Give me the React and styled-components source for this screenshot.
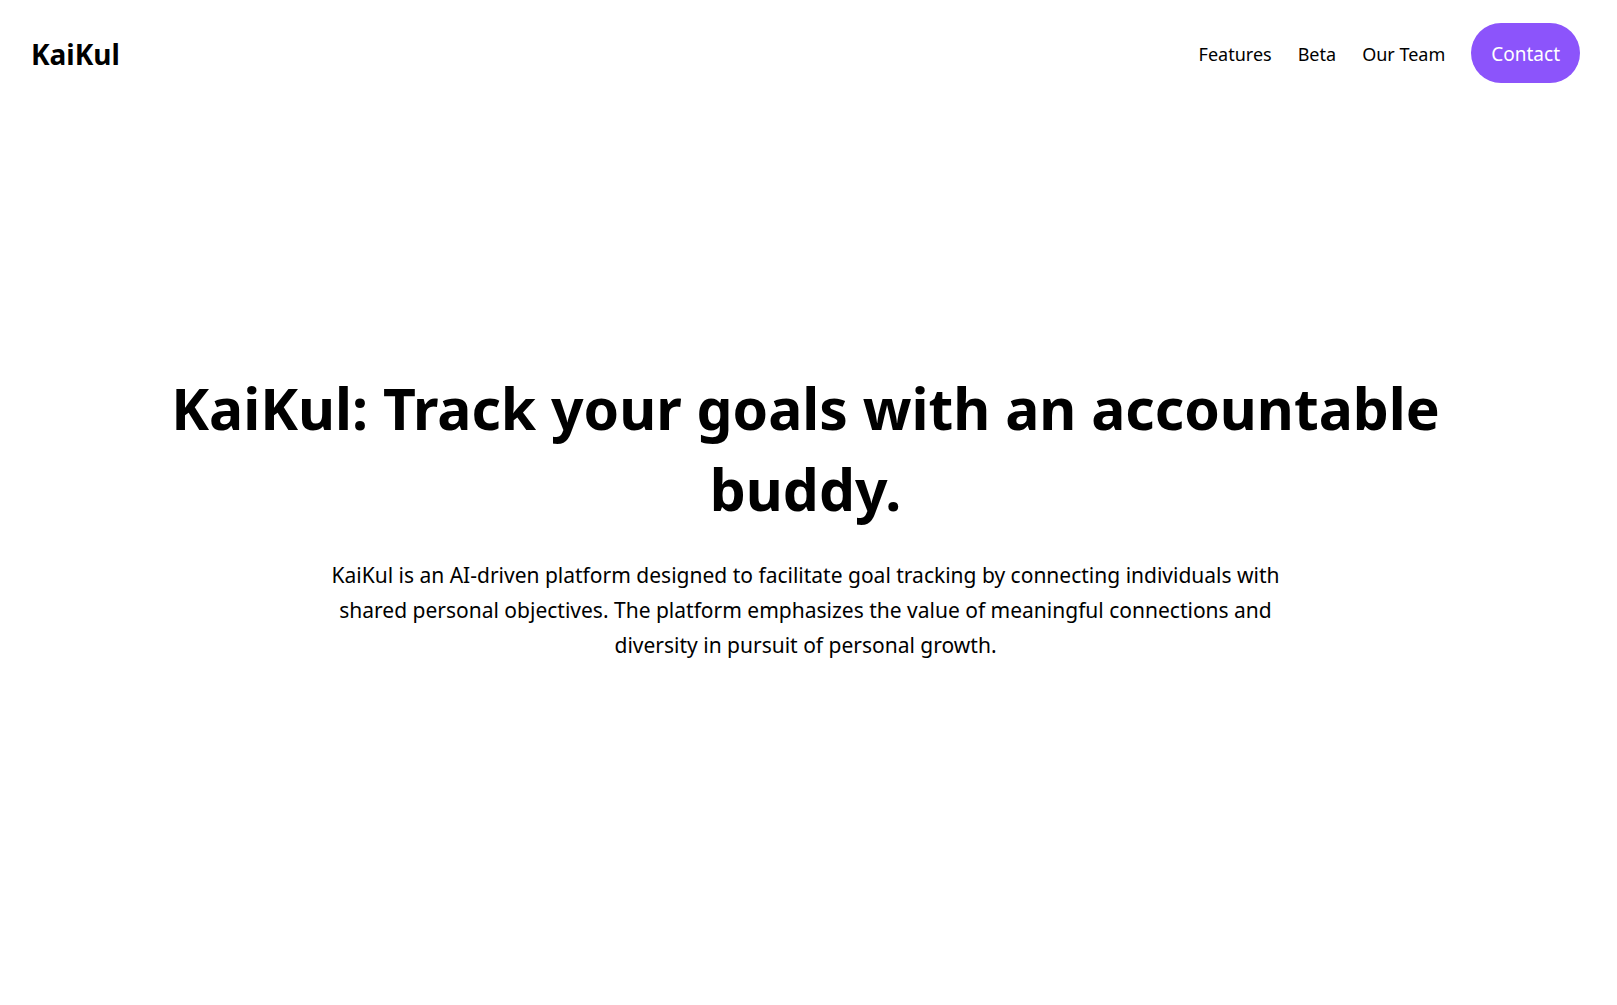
import React from "react";
import styled, { createGlobalStyle } from "styled-components";

const GlobalStyle = createGlobalStyle`
  *, *::before, *::after { box-sizing: border-box; }
  body {
    margin: 0;
    background: #fff;
    color: #000;
    font-family: "Noto Sans", "Open Sans", sans-serif;
  }
`;

const Page = styled.div`
  min-height: 100vh;
  display: flex;
  flex-direction: column;
  padding-right: 6px;
`;

const Header = styled.header`
  display: flex;
  align-items: center;
  justify-content: space-between;
  padding: 23px 31px;
`;

const Brand = styled.a`
  padding-top: 2px;
  color: inherit;
  font-size: 28px;
  font-weight: 700;
  line-height: 40px;
  text-decoration: none;
`;

const Nav = styled.nav`
  display: flex;
  align-items: center;
  gap: 26px;
`;

const NavLink = styled.a`
  padding-top: 2px;
  color: inherit;
  font-size: 18px;
  line-height: 28px;
  text-decoration: none;
`;

const ContactButton = styled.button`
  padding: 17px 20px 15px;
  border: 0;
  border-radius: 30px;
  background: #8c54fb;
  color: #fff;
  font-family: inherit;
  font-size: 19px;
  line-height: 28px;
  cursor: pointer;
`;

const Hero = styled.main`
  flex: 1;
  display: flex;
  flex-direction: column;
  align-items: center;
  justify-content: center;
  padding: 0 160px 80px;
  text-align: center;
`;

const Title = styled.h1`
  margin: 0 0 28px;
  font-size: 57px;
  font-weight: 700;
  line-height: 81px;
`;

const Lead = styled.p`
  max-width: 970px;
  margin: 0;
  font-size: 21px;
  line-height: 35px;
`;

const links = ["Features", "Beta", "Our Team"];

export default function App() {
  return (
    <Page>
      <GlobalStyle />
      <Header>
        <Brand href="#home">KaiKul</Brand>
        <Nav aria-label="Main">
          {links.map((label) => (
            <NavLink key={label} href={`#${label.toLowerCase().replace(" ", "-")}`}>
              {label}
            </NavLink>
          ))}
          <ContactButton type="button">Contact</ContactButton>
        </Nav>
      </Header>
      <Hero id="home">
        <Title>KaiKul: Track your goals with an accountable buddy.</Title>
        <Lead>
          KaiKul is an AI-driven platform designed to facilitate goal tracking by
          connecting individuals with shared personal objectives. The platform
          emphasizes the value of meaningful connections and diversity in pursuit
          of personal growth.
        </Lead>
      </Hero>
    </Page>
  );
}
